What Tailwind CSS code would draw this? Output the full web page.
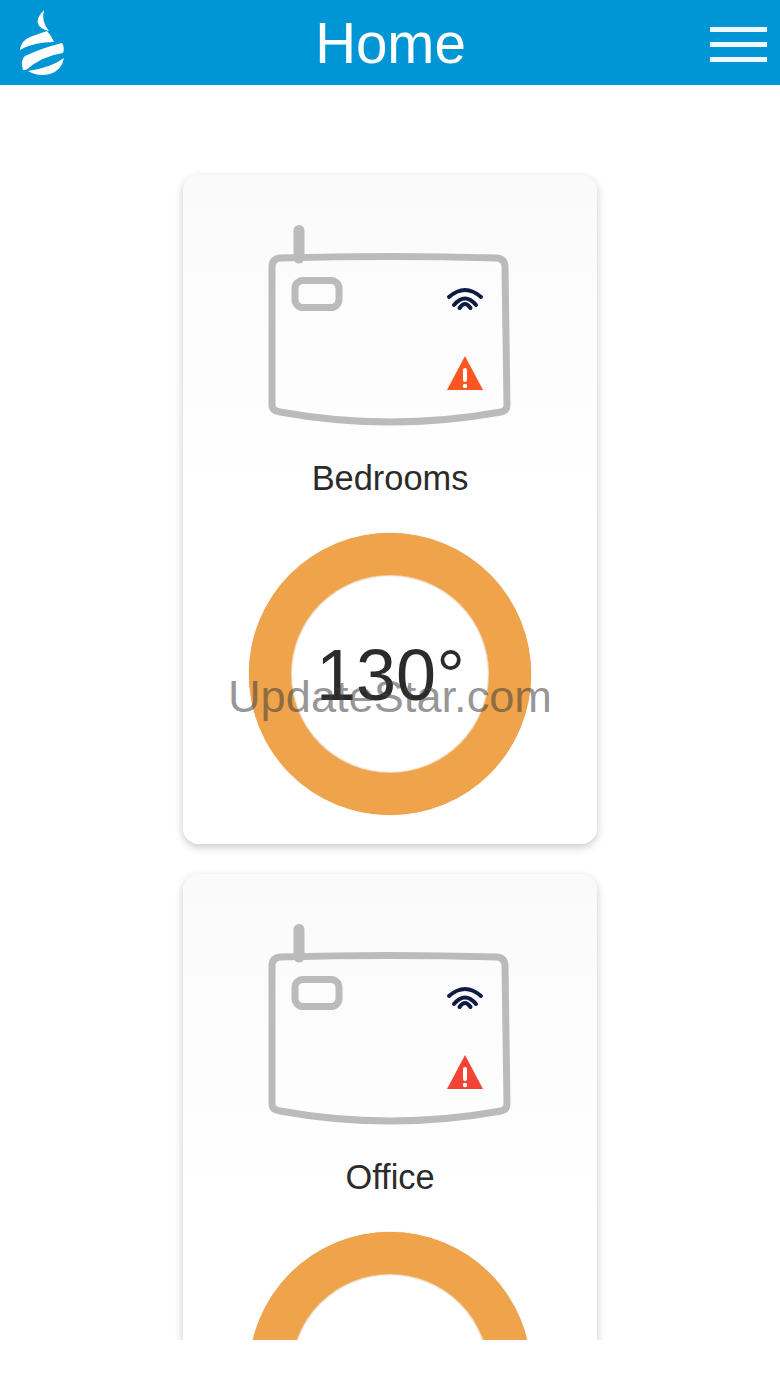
<!DOCTYPE html>
<html lang="en">
<head>
    <meta charset="UTF-8" />
    <meta name="viewport" content="width=device-width, initial-scale=1.0" />
    <title>Home</title>
    <script src="https://cdn.jsdelivr.net/npm/@tailwindcss/browser@4"></script>
</head>
<body class="bg-white font-['Liberation_Sans',Arial,sans-serif]">
    <div class="relative h-[1340px] overflow-hidden">
        <!-- Header -->
        <header class="h-[85px] bg-[#0096d6] grid grid-cols-[1fr_auto_1fr] items-center px-[18px]">
            <svg class="w-[48px] h-[70px]" viewBox="18 8 48 70" fill="#fff">
                <path d="M44 10 Q36 18 38 24 Q40 29 49 31 Q41 22 44 10 Z" />
                <path d="M20 49 Q22 40 30 37 Q38 34 47 31 Q51 35 54 42 Q34 42 20 50 Z" />
                <path d="M23 70 Q20 60 25 56 Q42 48 62 43 Q65 48 63 53 Q42 56 26 70 Z" />
                <path d="M64 58 Q62 70 50 74 Q38 77 28 71 Q50 68 64 58 Z" />
            </svg>
            <h1 class="text-[56.5px] leading-none text-white mt-[3px] ml-[1px]">Home</h1>
            <div class="w-[57px] justify-self-end -mr-[5px] mt-[4px] flex flex-col gap-[10px]">
                <span class="block h-[5px] bg-[#f2f9fd]"></span>
                <span class="block h-[5px] bg-[#f2f9fd]"></span>
                <span class="block h-[5px] bg-[#f2f9fd]"></span>
            </div>
        </header>

        <main class="pt-[90px] flex flex-col items-center gap-[30px]">
            <!-- Bedrooms -->
            <section class="w-[414px] h-[669px] shrink-0 rounded-[16px] bg-gradient-to-b from-[#fafafa] to-white to-50% shadow-[0_3px_8px_rgba(0,0,0,0.22)] pt-[45px] flex flex-col items-center">
                <svg class="w-[260px] h-[210px]" viewBox="0 0 260 210" fill="none">
                    <path d="M39 38 V10.5" stroke="#bbbbbb" stroke-width="11" stroke-linecap="round" />
                    <path d="M20 38 Q130 35 237 38 Q245 39 245 47 L247 185 Q247 191 241 192 Q130 212 20 192 Q12 191 12 185 V47 Q12 39 20 38 Z" stroke="#bbbbbb" stroke-width="7" />
                    <rect x="35" y="60.5" width="44" height="27" rx="8" stroke="#bbbbbb" stroke-width="7" />
                    <g stroke="#0f1b45" stroke-width="4" stroke-linecap="round">
                        <path d="M189 77 Q205 63 221 77" />
                        <path d="M194 85 Q205 72 216 85" />
                        <path d="M199.5 88 Q205 80 210.5 88" />
                    </g>
                    <path d="M205 136 L223 170 H187 Z" fill="#fb5522" />
                    <path d="M205 150 V160" stroke="#fff" stroke-width="4" stroke-linecap="round" />
                    <circle cx="205" cy="166" r="2.2" fill="#fff" />
                </svg>
                <p class="mt-[28px] text-[34.4px] leading-[40px] text-[#2b2b2b]">Bedrooms</p>
                <div class="mt-[35px] w-[282px] h-[282px] rounded-full border-[42px] border-[#efa34a] bg-white shadow-[0_0_1px_#c98a3a,inset_0_0_2px_#b9772a] flex items-center justify-center">
                    <span class="text-[72px] leading-none text-[#2b2b2b] ml-[1px] mt-[2px]">130°</span>
                </div>
            </section>

            <!-- Office -->
            <section class="w-[414px] h-[669px] shrink-0 rounded-[16px] bg-gradient-to-b from-[#fafafa] to-white to-50% shadow-[0_3px_8px_rgba(0,0,0,0.22)] pt-[45px] flex flex-col items-center">
                <svg class="w-[260px] h-[210px]" viewBox="0 0 260 210" fill="none">
                    <path d="M39 38 V10.5" stroke="#bbbbbb" stroke-width="11" stroke-linecap="round" />
                    <path d="M20 38 Q130 35 237 38 Q245 39 245 47 L247 185 Q247 191 241 192 Q130 212 20 192 Q12 191 12 185 V47 Q12 39 20 38 Z" stroke="#bbbbbb" stroke-width="7" />
                    <rect x="35" y="60.5" width="44" height="27" rx="8" stroke="#bbbbbb" stroke-width="7" />
                    <g stroke="#0f1b45" stroke-width="4" stroke-linecap="round">
                        <path d="M189 77 Q205 63 221 77" />
                        <path d="M194 85 Q205 72 216 85" />
                        <path d="M199.5 88 Q205 80 210.5 88" />
                    </g>
                    <path d="M205 136 L223 170 H187 Z" fill="#f44336" />
                    <path d="M205 150 V160" stroke="#fff" stroke-width="4" stroke-linecap="round" />
                    <circle cx="205" cy="166" r="2.2" fill="#fff" />
                </svg>
                <p class="mt-[28px] text-[34.4px] leading-[40px] text-[#2b2b2b]">Office</p>
                <div class="mt-[35px] w-[282px] h-[282px] rounded-full border-[42px] border-[#efa34a] bg-white shadow-[0_0_1px_#c98a3a,inset_0_0_2px_#b9772a]"></div>
            </section>
        </main>

        <!-- Watermark -->
        <div class="absolute left-0 right-0 top-[671px] text-center text-[45.2px] leading-[52px] text-[#3c3c3c]/55">UpdateStar.com</div>
    </div>
</body>
</html>
